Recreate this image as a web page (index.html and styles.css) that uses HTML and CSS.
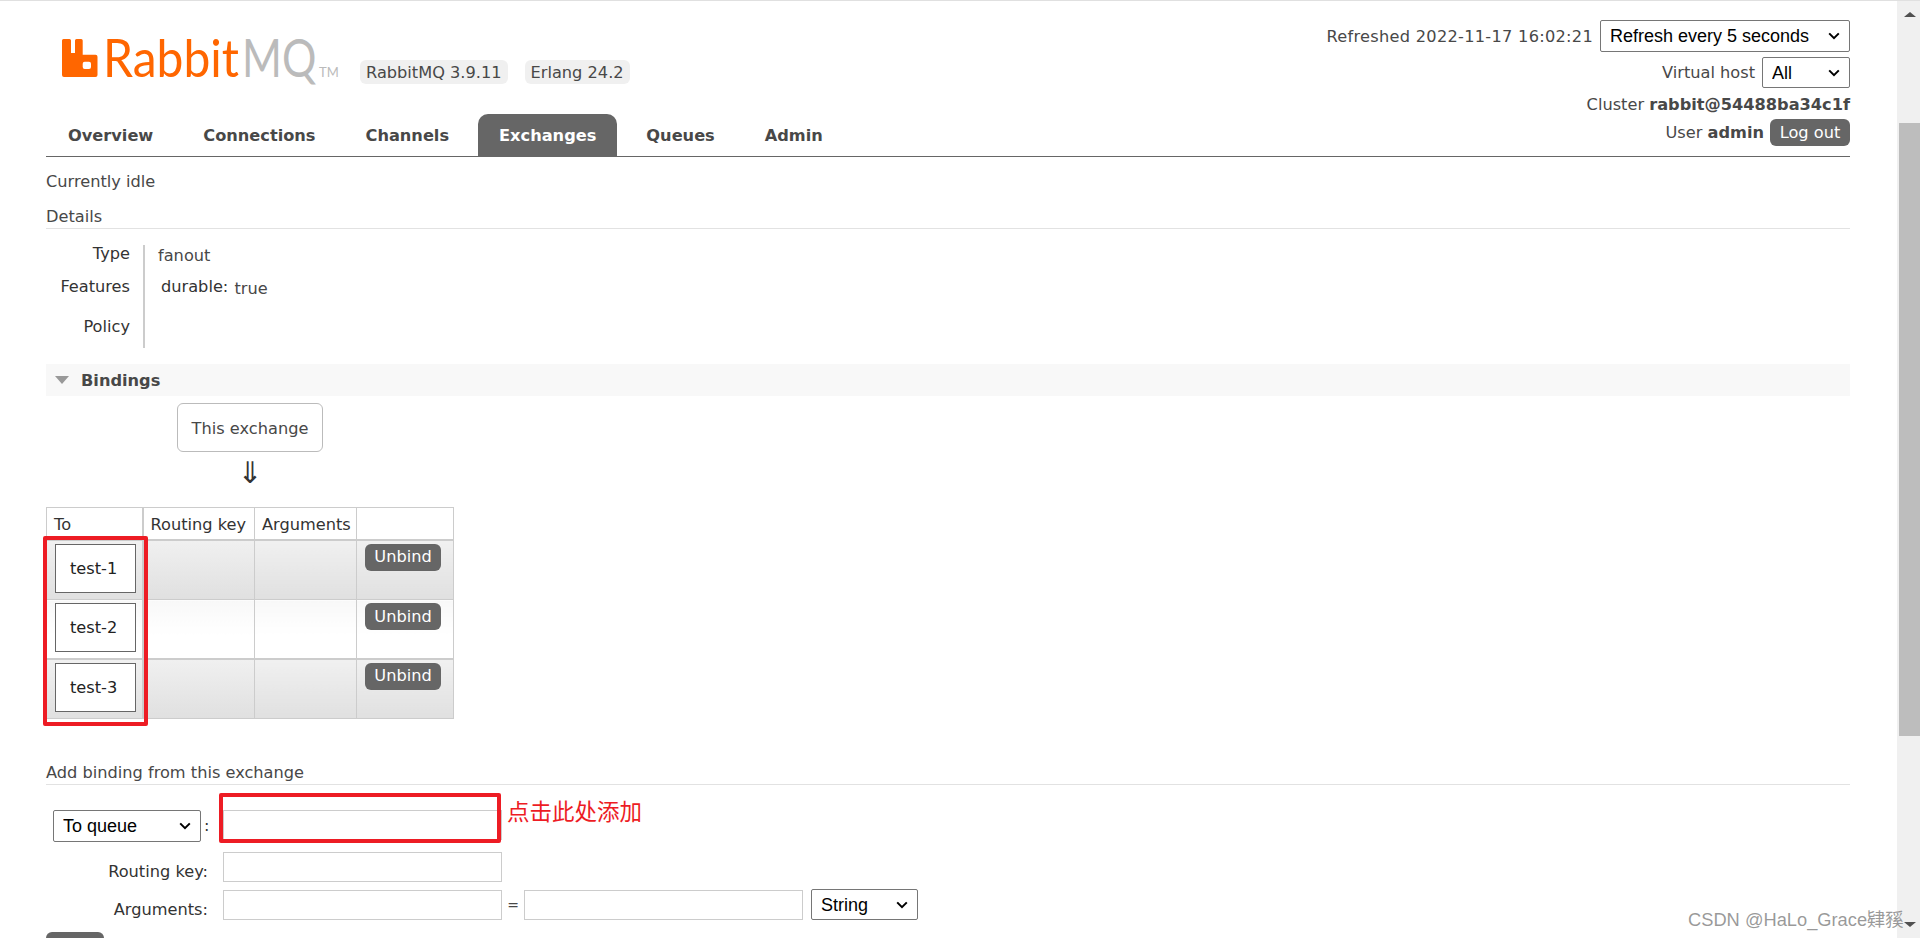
FILE: index.html
```html
<!DOCTYPE html>
<html lang="en">
<head>
<meta charset="utf-8">
<title>RabbitMQ Management</title>
<link rel="stylesheet" href="styles.css">
</head>
<body>
<div class="window">
  <div class="page">
    <header class="header">
      <div class="brand">
        <div class="brand-row">
          <a class="logo">
            <svg class="logo-svg" viewBox="0 0 277 38" width="277" height="38">
              <path class="logo-mark" fill-rule="evenodd" d="M1.5 0h6A1.5 1.5 0 0 1 9 1.5V14h4V1.5A1.5 1.5 0 0 1 14.5 0h4.7a1.5 1.5 0 0 1 1.5 1.500V15.700h12.800a2 2 0 0 1 2 2V36a2 2 0 0 1-2 2H2a2 2 0 0 1-2-2V1.500A1.500 1.500 0 0 1 1.500 0zM22.700 22.700a2 2 0 0 0-2 2V28a2 2 0 0 0 2 2H27a2 2 0 0 0 2-2v-3.300a2 2 0 0 0-2-2z"/>
              <text class="logo-word rabbit" transform="translate(41 38) scale(1 1.104)">Rabbit</text>
              <text class="logo-word mq" transform="translate(180 38) scale(1 1.233)">MQ</text>
              <text class="logo-tm" x="257" y="38">TM</text>
            </svg>
          </a>
          <span class="version">RabbitMQ 3.9.11</span>
          <span class="version">Erlang 24.2</span>
        </div>
        <nav class="tabs">
          <a class="tab">Overview</a>
          <a class="tab">Connections</a>
          <a class="tab">Channels</a>
          <a class="tab active">Exchanges</a>
          <a class="tab">Queues</a>
          <a class="tab">Admin</a>
        </nav>
      </div>
      <div class="login">
        <div class="login-row r1"><span>Refreshed 2022-11-17 16:02:21</span><select class="sel sel-refresh"><option>Refresh every 5 seconds</option></select></div>
        <div class="login-row r2"><span>Virtual host</span><select class="sel sel-vhost"><option>All</option></select></div>
        <div class="login-row r3"><span>Cluster <b>rabbit@54488ba34c1f</b></span></div>
        <div class="login-row r4"><span>User <b>admin</b></span><button class="btn logout">Log out</button></div>
      </div>
    </header>

    <p class="status">Currently idle</p>
    <h2 class="section-title details-title">Details</h2>

    <div class="facts">
      <div class="fact-labels">
        <div class="l-type">Type</div>
        <div class="l-features">Features</div>
        <div class="l-policy">Policy</div>
      </div>
      <div class="fact-values">
        <div class="v-type">fanout</div>
        <div class="v-features"><span class="key">durable:</span> <abbr class="val">true</abbr></div>
      </div>
    </div>

    <div class="section-bar"><span class="tri"></span><span class="bar-label">Bindings</span></div>

    <div class="diagram">
      <div class="this-box">This exchange</div>
      <div class="arrow">⇓</div>
    </div>

    <div class="table-wrap">
      <table class="bindings">
        <thead>
          <tr><th class="c1">To</th><th class="c2">Routing key</th><th class="c3">Arguments</th><th class="c4"></th></tr>
        </thead>
        <tbody>
          <tr class="alt1"><td><div class="queue">test-1</div></td><td></td><td></td><td><button class="btn unbind">Unbind</button></td></tr>
          <tr class="alt2"><td><div class="queue">test-2</div></td><td></td><td></td><td><button class="btn unbind">Unbind</button></td></tr>
          <tr class="alt1"><td><div class="queue">test-3</div></td><td></td><td></td><td><button class="btn unbind">Unbind</button></td></tr>
        </tbody>
      </table>
      <div class="mark mark-queues"></div>
    </div>

    <h2 class="section-title add-title">Add binding from this exchange</h2>

    <form class="add-form">
      <div class="first-label"><select class="sel sel-dest"><option>To queue</option></select><span>:</span></div>
      <div class="first-input">
        <input class="txt" type="text">
        <div class="mark mark-input"></div>
        <span class="note">点击此处添加</span>
      </div>
      <div class="field-label">Routing key:</div>
      <div class="row-routing"><input class="txt" type="text"></div>
      <div class="field-label">Arguments:</div>
      <div class="args"><input class="txt" type="text"><span class="eq">=</span><input class="txt" type="text"><select class="sel sel-type"><option>String</option></select></div>
    </form>
    <button class="btn add">Bind</button>
  </div>

  <div class="scrollbar">
    <span class="sb-up"></span>
    <span class="sb-thumb"></span>
    <span class="sb-down"></span>
  </div>
  <div class="watermark">CSDN @HaLo_Grace肄豯</div>
</div>
</body>
</html>
```
FILE: styles.css
```css
* { box-sizing: border-box; }
html, body { margin: 0; height: 938px; overflow: hidden; background: #fff; }
body { font: 16.2px/18px "DejaVu Sans", Verdana, sans-serif; color: #484848; }
.window { position: relative; display: flex; height: 938px; overflow: hidden; border-top: 1px solid #e0e0e0; }
.page { width: 1897px; padding: 0 47px 0 46px; flex: none; }

.header { display: flex; justify-content: space-between; height: 155px; border-bottom: 1px solid #666; box-sizing: content-box; }
.brand-row { display: flex; align-items: flex-start; height: 113px; padding: 38px 0 0 16px; }
.logo { display: block; width: 277px; height: 38px; flex: none; }
.logo-svg { display: block; overflow: visible; }
.logo-mark { fill: #f60; }
.logo-word { font: 400 48px "Lato", "Open Sans", sans-serif; }
.rabbit { fill: #f60; }
.mq { fill: #bbb; font-size: 43px; }
.logo-tm { font: 400 13px "Lato", "Open Sans", sans-serif; fill: #bbb; }
.version { height: 24px; line-height: 26px; padding: 0 6px; background: #f0f0f0; border-radius: 6px; margin: 21px 0 0 17px; flex: none; }
.version:first-of-type { margin-left: 21px; }

.tabs { display: flex; gap: 8px; padding-left: 1px; }
.tab { height: 42px; line-height: 43px; padding: 0 21px; font-weight: 700; border-radius: 10px 10px 0 0; }
.tab.active { background: #666; color: #fff; }

.login { display: flex; flex-direction: column; align-items: flex-end; padding-top: 19px; }
.login-row { display: flex; align-items: center; justify-content: flex-end; gap: 7px; white-space: nowrap; }
.r1 { height: 32px; }
.r1 span { position: relative; top: 1px; letter-spacing: .28px; }
.r2 { height: 31px; margin-top: 5px; }
.r3 { height: 18px; margin-top: 7px; padding-top: 1px; }
.r4 { height: 27px; margin-top: 6px; gap: 6px; }

.sel {
  appearance: none; font: 18px "Liberation Sans", Arial, sans-serif; color: #000; border: 1px solid #767676; border-radius: 2px; padding: 0 0 0 9px; flex: none;
  background: #fff url("data:image/svg+xml,%3Csvg xmlns='http://www.w3.org/2000/svg' width='12' height='8' viewBox='0 0 12 8'%3E%3Cpath d='M1.200 1.400 6 6.200l4.800-4.800' fill='none' stroke='%23000' stroke-width='2'/%3E%3C/svg%3E") no-repeat right 9px center;
}
.sel-refresh { width: 250px; height: 32px; }
.sel-vhost { width: 88px; height: 31px; }
.sel-dest { width: 148px; height: 32px; }
.sel-type { width: 107px; height: 31px; margin-left: 8px; }

.btn { border: 0; background: #666; color: #fff; font: 16.2px/18px "DejaVu Sans", Verdana, sans-serif; border-radius: 6px; padding: 0; }
.logout { width: 80px; height: 27px; }
.unbind { width: 76px; height: 27px; display: block; }
.add { display: block; width: 58px; height: 30px; margin-top: 12px; }

.status { margin: 16px 0 0; height: 18px; }
.section-title { font-size: 16.2px; line-height: 18px; font-weight: 400; margin: 0; border-bottom: 1px solid #e2e2e2; box-sizing: content-box; }
.details-title { margin-top: 17px; padding-bottom: 2px; }

.facts { display: flex; margin-top: 16px; height: 103px; }
.fact-labels { width: 99px; border-right: 2px solid #ccc; text-align: right; padding-right: 13px; color: #333; }
.l-features { margin-top: 15px; }
.l-policy { margin-top: 22px; }
.fact-values { padding-left: 13px; }
.v-type { margin-top: 2px; }
.v-features { margin-top: 13px; padding-left: 3px; }
.key { color: #333; }
.val { margin-left: 1px; position: relative; top: 2px; }

.section-bar { display: flex; align-items: center; height: 32px; margin-top: 16px; background: #f8f8f8; font-weight: 700; }
.bar-label { position: relative; top: 1px; }
.tri { width: 0; height: 0; border: 7px solid transparent; border-top: 8px solid #999; border-bottom: 0; margin: 0 12px 0 9px; }

.diagram { height: 111px; padding: 7px 0 0 131px; }
.this-box { width: 146px; height: 49px; line-height: 49px; text-align: center; border: 1px solid #bbb; border-radius: 6px; }
.arrow { width: 146px; text-align: center; font: 30px/32px "Liberation Sans", "DejaVu Sans", sans-serif; margin-top: 5px; color: #333; }

.table-wrap { position: relative; }
.bindings { border-collapse: collapse; width: 407px; table-layout: fixed; color: #333; }
.bindings th, .bindings td { border: 1px solid #ccc; padding: 0; vertical-align: top; text-align: left; font-weight: 400; }
.bindings th { height: 32px; padding: 8px 0 4px 7px; white-space: nowrap; }
.c1 { width: 96px; } .c2 { width: 112px; } .c3 { width: 102px; } .c4 { width: 97px; }
.bindings thead th { border-bottom: 2px solid #ccc; }
.bindings th.c1 { border-right: 2px solid #ccc; }
.bindings td:first-child { border-right: 2px solid #ccc; padding: 3px 0 0 8px; }
.bindings td:last-child { padding: 3px 0 0 8px; }
.alt1 td { height: 60px; background: linear-gradient(#f0f0f0, #e0e0e0); }
.alt2 td { height: 59px; background: linear-gradient(#f8f8f8, #fff 60%); border-bottom: 2px solid #ccc; }
.queue { width: 81px; height: 49px; line-height: 48px; padding-left: 14px; background: #fff; border: 1px solid #666; color: #222; }

.mark { position: absolute; border: 4px solid #ed1c24; border-radius: 2px; pointer-events: none; }
.mark-queues { left: -3px; top: 29px; width: 105px; height: 190px; }
.mark-input { left: -4px; top: -16px; width: 282px; height: 50px; }

.add-title { margin-top: 45px; padding-bottom: 2px; }
.add-form { display: grid; grid-template-columns: 162px 1fr; column-gap: 15px; margin-top: 24px; align-items: center; }
.field-label { text-align: right; padding-top: 10px; color: #333; }
.first-label { display: flex; align-items: center; gap: 3px; color: #333; padding-left: 7px; }
.first-input { position: relative; height: 33px; padding-top: 1px; }
.row-routing, .first-input + .field-label { margin-top: 10px; }
.field-label:nth-child(5), .args { margin-top: 7px; }
.txt { display: block; width: 279px; height: 30px; border: 1px solid #ccc; background: #fff; padding: 0; flex: none; }
.args { display: flex; align-items: center; }
.eq { width: 22px; text-align: center; font-size: 14px; }
.note { position: absolute; left: 284px; top: -13px; font: 22.500px/28px "Noto Sans CJK SC", sans-serif; color: #ed1c24; white-space: nowrap; }

.scrollbar { width: 23px; flex: none; background: #f0f0f0; display: flex; flex-direction: column; align-items: center; padding-left: 2px; }
.sb-up { width: 0; height: 0; margin-top: 11px; border: 6px solid transparent; border-bottom: 5px solid #505050; border-top: 0; }
.sb-thumb { width: 100%; height: 613px; margin-top: 106px; background: #bdbdbd; }
.sb-down { width: 0; height: 0; margin-top: 186px; border: 6px solid transparent; border-top: 5px solid #505050; border-bottom: 0; }

.watermark { position: absolute; left: 1688px; top: 907px; font: 18.300px/24px "Liberation Sans", "Noto Sans CJK SC", sans-serif; color: rgba(120,120,120,.75); white-space: nowrap; }
```
